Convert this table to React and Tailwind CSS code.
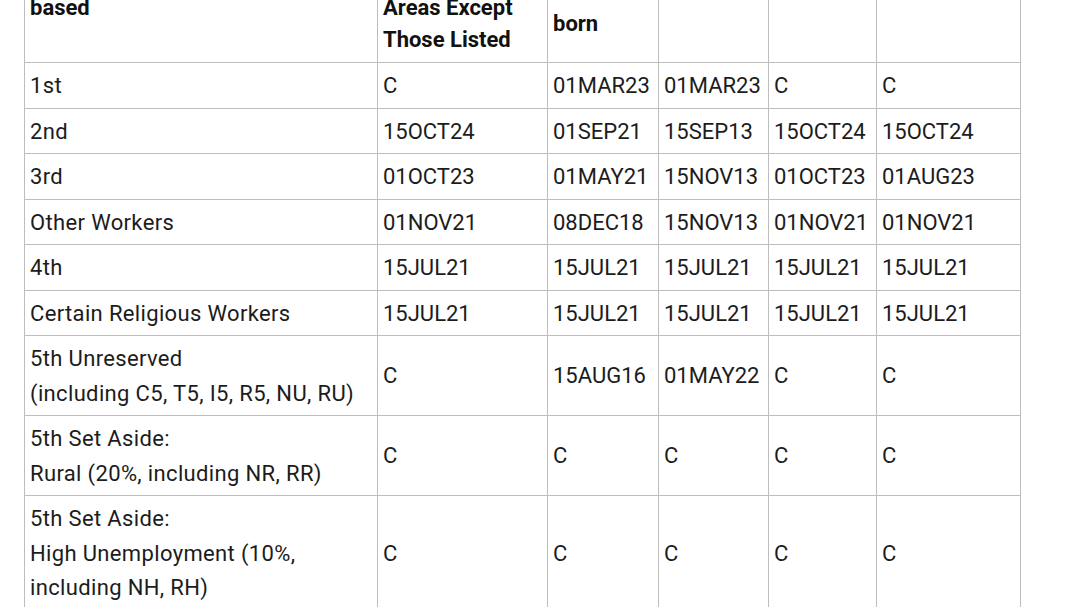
import React from "react";

const rows = [
  [["1st"], ["C", "01MAR23", "01MAR23", "C", "C"]],
  [["2nd"], ["15OCT24", "01SEP21", "15SEP13", "15OCT24", "15OCT24"]],
  [["3rd"], ["01OCT23", "01MAY21", "15NOV13", "01OCT23", "01AUG23"]],
  [["Other Workers"], ["01NOV21", "08DEC18", "15NOV13", "01NOV21", "01NOV21"]],
  [["4th"], ["15JUL21", "15JUL21", "15JUL21", "15JUL21", "15JUL21"]],
  [["Certain Religious Workers"], ["15JUL21", "15JUL21", "15JUL21", "15JUL21", "15JUL21"]],
  [["5th Unreserved", "(including C5, T5, I5, R5, NU, RU)"], ["C", "15AUG16", "01MAY22", "C", "C"]],
  [["5th Set Aside:", "Rural (20%, including NR, RR)"], ["C", "C", "C", "C", "C"]],
  [["5th Set Aside:", "High Unemployment (10%,", "including NH, RH)"], ["C", "C", "C", "C", "C"]],
];

export default function App() {
  return (
    <div
      className="h-[607px] w-[1080px] overflow-hidden bg-white text-[#1c1c1c]"
      style={{ fontFamily: "Roboto, 'Noto Sans', sans-serif" }}
    >
      <table className="ml-[24px] mt-[-58px] w-[996px] table-fixed border-collapse text-[22px] leading-[34.5px]">
        <colgroup>
          <col className="w-[353px]" />
          <col className="w-[170px]" />
          <col className="w-[111px]" />
          <col className="w-[110px]" />
          <col className="w-[108px]" />
          <col className="w-[144px]" />
        </colgroup>
        <thead>
          <tr className="h-[120px]">
            <th className="border border-[#bdbdbd] px-[5px] pb-[38px] text-left align-bottom font-bold leading-[32px] text-[#111]">
              based
            </th>
            <th className="border border-[#bdbdbd] px-[5px] pb-[6px] text-left align-bottom font-bold leading-[32px] text-[#111]">
              <div>Chargeability</div>
              <div>Areas Except</div>
              <div>Those Listed</div>
            </th>
            <th className="border border-[#bdbdbd] px-[5px] pb-[22px] text-left align-bottom font-bold leading-[32px] text-[#111]">
              born
            </th>
            <th className="border border-[#bdbdbd] px-[5px]"></th>
            <th className="border border-[#bdbdbd] px-[5px]"></th>
            <th className="border border-[#bdbdbd] px-[5px]"></th>
          </tr>
        </thead>
        <tbody>
          {rows.map(([label, vals], i) => (
            <tr key={i}>
              <td className="border border-[#bdbdbd] px-[5px] pt-[6px] pb-[4px] align-middle tracking-[0.35px]">
                {label.map((l, j) => (
                  <div key={j} className="whitespace-nowrap">{l}</div>
                ))}
              </td>
              {vals.map((v, j) => (
                <td key={j} className="border border-[#bdbdbd] px-[5px] pt-[6px] pb-[4px] align-middle whitespace-nowrap">
                  {v}
                </td>
              ))}
            </tr>
          ))}
        </tbody>
      </table>
    </div>
  );
}
